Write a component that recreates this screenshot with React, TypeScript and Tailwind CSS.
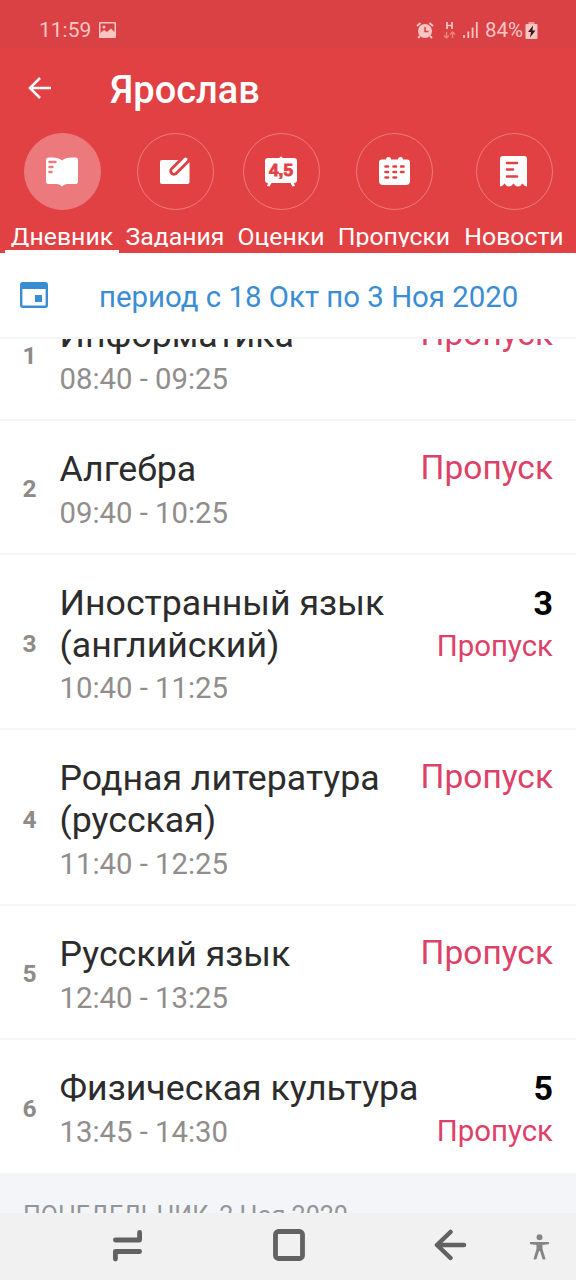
import React from 'react';
import clsx from 'clsx';

interface Lesson {
  num: number;
  title: string[];
  time: string;
  mark?: string;
}

const lessons: Lesson[] = [
  { num: 1, title: ['Информатика'], time: '08:40 - 09:25' },
  { num: 2, title: ['Алгебра'], time: '09:40 - 10:25' },
  { num: 3, title: ['Иностранный язык', '(английский)'], time: '10:40 - 11:25', mark: '3' },
  { num: 4, title: ['Родная литература', '(русская)'], time: '11:40 - 12:25' },
  { num: 5, title: ['Русский язык'], time: '12:40 - 13:25' },
  { num: 6, title: ['Физическая культура'], time: '13:45 - 14:30', mark: '5' },
];

const DiaryIcon = () => (
  <svg width="32" height="30" viewBox="0 0 32 30">
    <path
      d="M0 3Q0 .5 3 .5H6Q13 .5 16 3.5Q19 .5 26 .5H29.500Q32 .5 32 3V24.500Q32 27 29.500 27H21Q18 27 16 29.500Q14 27 11 27H2.500Q0 27 0 24.500Z"
      fill="#fff"
    />
    <path d="M3.500 5H9.500M3.500 10H6.500M3.500 15H5.500" stroke="#ec7a7c" strokeWidth="2.400" strokeLinecap="round" />
  </svg>
);

const TasksIcon = () => (
  <svg className="mb-0.5" width="30" height="30" viewBox="0 0 30 30">
    <rect x="0" y="4" width="29.500" height="24" rx="2" fill="#fff" />
    <path d="M26.500 2.500L14 15" stroke="#e24144" strokeWidth="9.500" strokeLinecap="round" />
    <path d="M25.500 3.500L14 15" stroke="#fff" strokeWidth="3.800" strokeLinecap="round" />
  </svg>
);

const MarksIcon = () => (
  <svg width="32" height="31" viewBox="0 0 32 31">
    <path
      d="M3 2H14.500Q14.500 .5 16 .5Q17.500 .5 17.500 2H29Q32 2 32 5V24Q32 27 29 27L30 30L27.500 30.500L25.500 27H6.500L4.500 30.500L2 30L3 27Q0 27 0 24V5Q0 2 3 2Z"
      fill="#fff"
    />
    <text
      x="16"
      y="20"
      textAnchor="middle"
      textLength="24"
      lengthAdjust="spacingAndGlyphs"
      className="fill-[#e24144] font-['Liberation_Sans'] text-[16px] font-bold"
      stroke="#e24144"
      strokeWidth=".8"
    >
      4,5
    </text>
  </svg>
);

const AbsenceIcon = () => (
  <svg className="mb-0.5" width="31" height="28" viewBox="0 0 31 28">
    <path
      d="M3 2.500H7Q7 0 9.500 0Q12 0 12 2.500H19Q19 0 21.500 0Q24 0 24 2.500H28Q31 2.500 31 5.500V24Q31 28 27 28H4Q0 28 0 24V5.500Q0 2.500 3 2.500Z"
      fill="#fff"
    />
    <path
      d="M6.500 9.500H9M14.500 9.500H17M22 9.500H24.500M6.500 15H9M14.500 15H17M22 15H24.500M6.500 20.500H9M14.500 20.500H17"
      stroke="#e24144"
      strokeWidth="2.600"
      strokeLinecap="round"
    />
  </svg>
);

const NewsIcon = () => (
  <svg width="28" height="31" viewBox="0 0 28 31">
    <path
      d="M0 3Q0 0 3 0H24Q27 0 27 3V30.500Q24.500 30.500 22.500 27.500Q20.500 30.500 18 30.500Q15.500 30.500 13.500 27.500Q11.500 30.500 9 30.500Q6.500 30.500 4.500 27.500Q2.500 30.500 0 30.500Z"
      fill="#fff"
    />
    <path d="M7 7H17M7 13.500H13M7 20.500H17" stroke="#e24144" strokeWidth="2.600" strokeLinecap="round" />
  </svg>
);

const tabs = [
  { label: 'Дневник', icon: <DiaryIcon />, width: 'w-[114px]', active: true },
  { label: 'Задания', icon: <TasksIcon />, width: 'w-[112px]' },
  { label: 'Оценки', icon: <MarksIcon />, width: 'w-[100px]' },
  { label: 'Пропуски', icon: <AbsenceIcon />, width: 'w-[126px]' },
  { label: 'Новости', icon: <NewsIcon />, width: 'w-[114px]' },
];

const StatusBar = () => (
  <div className="flex h-12 shrink-0 items-center justify-between bg-[#da4144] pt-3 pr-[38px] pl-[39px] text-[#fac6c4]">
    <div className="flex items-center gap-2">
      <span className="w-[52px] text-[21px] leading-6 whitespace-nowrap">11:59</span>
      <svg width="17" height="16" viewBox="0 0 17 16">
        <path
          fill="currentColor"
          fillRule="evenodd"
          d="M1 0H16Q17 0 17 1V15Q17 16 16 16H1Q0 16 0 15V1Q0 0 1 0ZM1.500 1.500V11L5 8L8 10L12 6.500L15.500 10V1.500ZM5 3.500A1.500 1.500 0 1 1 5 6.500A1.500 1.500 0 1 1 5 3.500Z"
        />
      </svg>
    </div>
    <div className="flex items-center">
      <svg width="18" height="17" viewBox="0 0 18 17">
        <circle cx="9" cy="9" r="7" fill="currentColor" />
        <path d="M1 4L4.500 1M17 4L13.500 1M4 14L2 16M14 14L16 16" stroke="currentColor" strokeWidth="1.800" />
        <path d="M9 5V9.500H12.500" fill="none" stroke="#da4144" strokeWidth="1.500" />
      </svg>
      <svg className="ml-[9px]" width="13" height="18" viewBox="0 0 13 18">
        <path d="M4 1V8M9 1V8M4 4.500H9" stroke="currentColor" strokeWidth="1.700" />
        <path d="M3.500 11V17M1 14.500L3.500 17L6 14.500M9.500 17V11M7 13.500L9.500 11L12 13.500" fill="none" stroke="#ef8380" strokeWidth="1.400" />
      </svg>
      <svg className="ml-[7px]" width="15" height="16" viewBox="0 0 15 16">
        <path d="M1 13V16M5.300 9.500V16M9.600 5.500V16M13.800 0V16" stroke="currentColor" strokeWidth="1.800" />
      </svg>
      <span className="ml-[7px] w-[39px] text-[20.500px] leading-6 whitespace-nowrap">84%</span>
      <svg className="ml-px" width="13" height="17" viewBox="0 0 13 17">
        <path d="M3.500 0H9.500V2H3.500Z" fill="#f19b98" />
        <rect x=".5" y="2" width="12" height="15" rx="1" fill="currentColor" />
        <path d="M8 3.500L3 10H6L5 15.500L10.500 8.500H7.500Z" fill="#40161b" />
      </svg>
    </div>
  </div>
);

const Header = () => (
  <div className="flex h-[205px] shrink-0 flex-col bg-[#e24144] text-white">
    <div className="flex h-[85px] items-center pb-0.5 pl-7">
      <svg className="mb-1" width="24" height="22" viewBox="0 0 24 22">
        <path d="M12 1L2 11L12 21M2 11H23" fill="none" stroke="#fff" strokeWidth="2.500" />
      </svg>
      <h1 className="ml-[58px] text-[38px] leading-[44px] font-medium">Ярослав</h1>
    </div>
    <div className="flex h-[120px] px-[5px]">
      {tabs.map((tab) => (
        <div key={tab.label} className={clsx('flex flex-col items-center', tab.width)}>
          <div
            className={clsx(
              'flex size-[77px] shrink-0 items-center justify-center rounded-full border-[1.500px] border-[#ee7b7c]',
              tab.active && 'bg-[#ec7a7c]'
            )}
          >
            {tab.icon}
          </div>
          <div className="mt-[13px] h-[24px] overflow-hidden text-[24.800px] leading-[28px] whitespace-nowrap">
            {tab.label}
          </div>
          <div className={clsx('mt-auto h-[3px] w-full', tab.active && 'bg-white')} />
        </div>
      ))}
    </div>
  </div>
);

const LessonRow: React.FC<{ lesson: Lesson }> = ({ lesson }) => (
  <div className="flex border-b-2 border-[#f5f5f6] pt-[28px] pr-[23px] pb-[23px]">
    <div className="w-[59.500px] shrink-0 self-center pl-[22.500px] text-[24.500px] leading-[26px] font-bold text-[#8e8a8a]">
      {lesson.num}
    </div>
    <div className="flex-1">
      {lesson.title.map((line) => (
        <div key={line} className="text-[35.700px] leading-[41.800px] whitespace-nowrap text-[#2c2c2c]">
          {line}
        </div>
      ))}
      <div className="mt-[5px] text-[29.300px] leading-[34px] text-[#918d8d]">{lesson.time}</div>
    </div>
    <div className="flex flex-col items-end text-[#dc4269]">
      {lesson.mark ? (
        <>
          <div className="text-[34px] leading-[41px] font-bold text-black">{lesson.mark}</div>
          <div className="mt-1 text-[29.400px] leading-[37px]">Пропуск</div>
        </>
      ) : (
        <div className="text-[33.500px] leading-[37px]">Пропуск</div>
      )}
    </div>
  </div>
);

const NavBar = () => (
  <div className="flex h-[67px] shrink-0 items-center bg-[#f1f1f1] pb-[3px] pl-[113px] text-[#626262]">
    <svg width="30" height="34" viewBox="0 0 30 34" fill="none" stroke="currentColor" strokeWidth="4.800" strokeLinecap="round" strokeLinejoin="round">
      <path d="M2.400 12H26.600V4.500M26.600 23.500H2.400V31" />
    </svg>
    <svg className="ml-[130px]" width="32" height="32" viewBox="0 0 32 32">
      <rect x="2.500" y="2.500" width="27" height="27" rx="3" fill="none" stroke="currentColor" strokeWidth="4.800" />
    </svg>
    <svg className="ml-[129px]" width="33" height="32" viewBox="0 0 33 32" fill="none" stroke="currentColor" strokeWidth="4.500" strokeLinecap="round" strokeLinejoin="round">
      <path d="M16.500 3L3 16L16.500 29M3 16H30" />
    </svg>
    <svg className="mt-[3px] ml-[62px]" width="21" height="26" viewBox="0 0 21 26" fill="#858585">
      <circle cx="10.500" cy="3.200" r="3" />
      <path d="M1 8H20Q20.500 10 19.500 10.200L13.500 11V15L16.500 25Q15 26 13.500 25L11 17H10L7.500 25Q6 26 4.500 25L7.500 15V11L1.500 10.200Q.5 10 1 8Z" />
    </svg>
  </div>
);

export default function App() {
  return (
    <div className="flex h-[1280px] w-[576px] flex-col overflow-hidden bg-white font-['Roboto',sans-serif]">
      <StatusBar />
      <Header />
      <div className="flex h-[86px] shrink-0 items-center border-b-2 border-[#f5f5f6] pl-5 text-[#3b8dd3]">
        <svg width="28" height="26" viewBox="0 0 28 26">
          <rect x="1.200" y="1.200" width="25.600" height="23.600" rx="1.500" fill="none" stroke="currentColor" strokeWidth="2.400" />
          <path d="M1 1H27V7H1ZM15 13H22V20H15Z" fill="currentColor" />
        </svg>
        <span className="mt-[3px] ml-[51px] text-[29.400px] leading-[34px] whitespace-nowrap">
          период с 18 Окт по 3 Ноя 2020
        </span>
      </div>

      {/* first lesson is scrolled partly under the period bar */}
      <div className="flex h-[82px] shrink-0 flex-col justify-end overflow-hidden">
        <LessonRow lesson={lessons[0]} />
      </div>
      {lessons.slice(1).map((lesson) => (
        <LessonRow key={lesson.num} lesson={lesson} />
      ))}

      <div className="min-h-0 flex-1 overflow-hidden bg-[#f3f5f8] pt-[26px] pl-[23px] text-[25px] leading-[30px] whitespace-nowrap text-[#929599]">
        ПОНЕДЕЛЬНИК, 2 Ноя 2020
      </div>
      <NavBar />
    </div>
  );
}
